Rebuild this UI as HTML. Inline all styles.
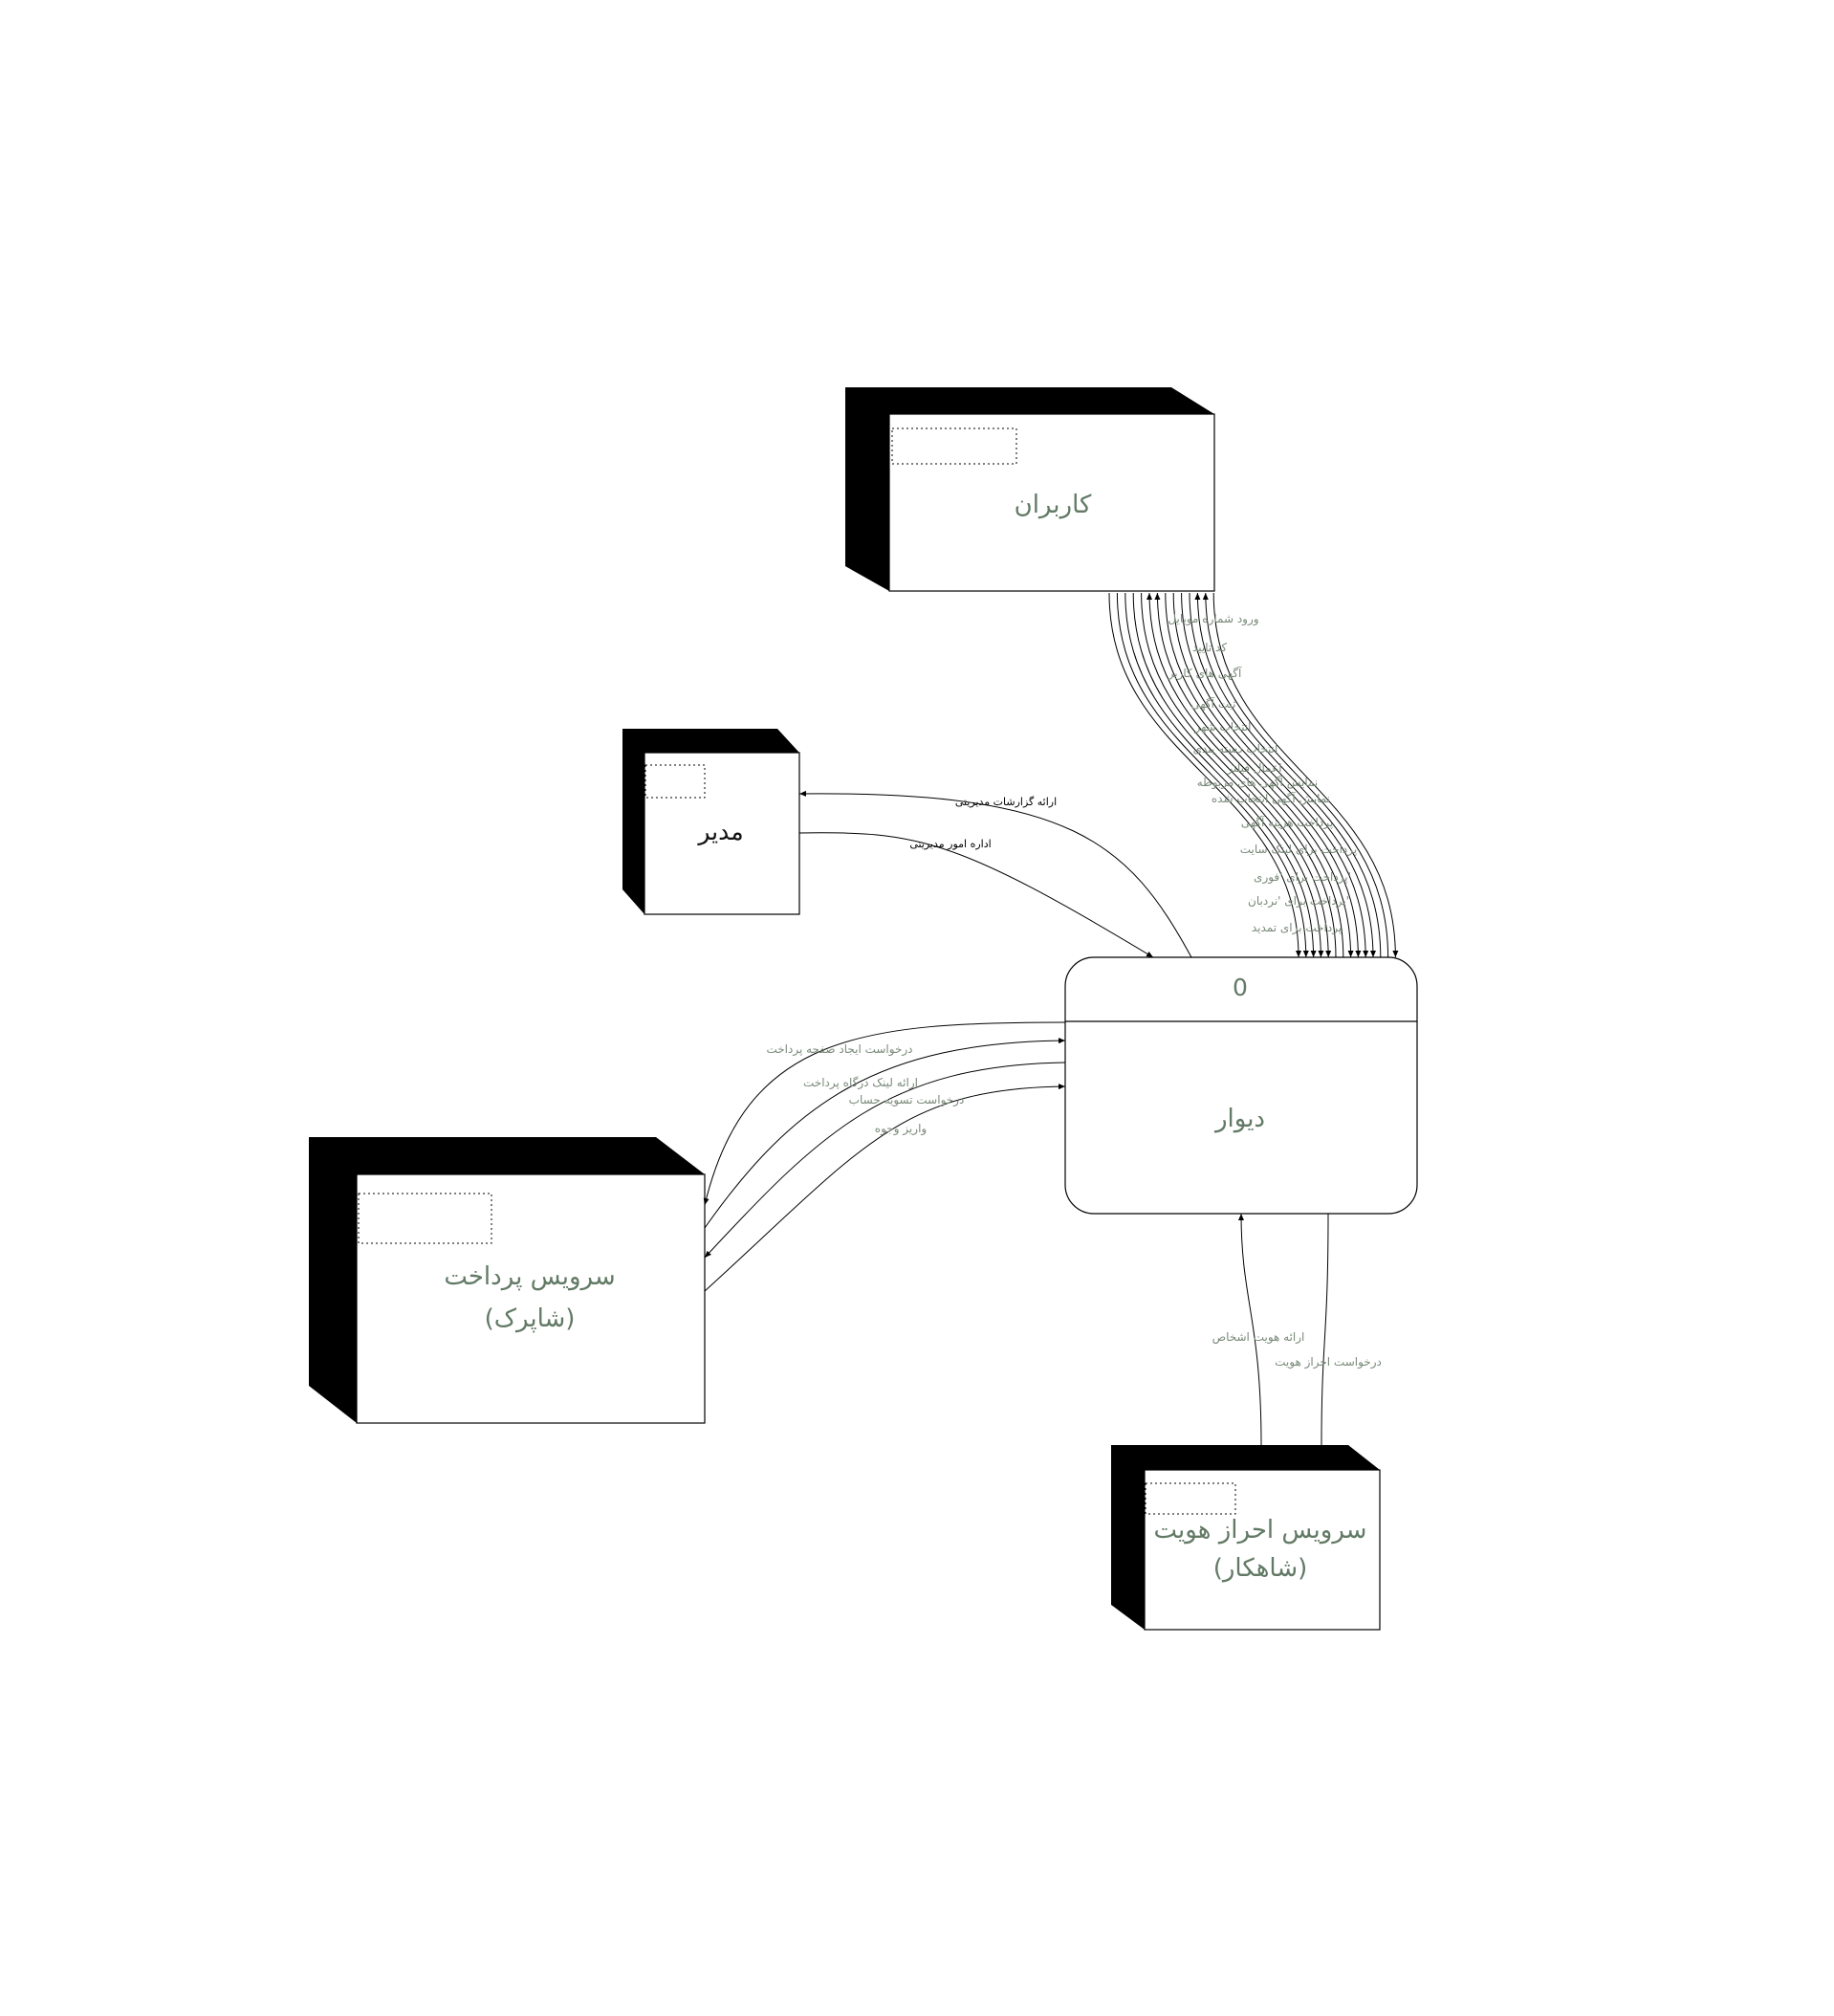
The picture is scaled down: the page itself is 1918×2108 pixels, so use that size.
<!DOCTYPE html>
<html><head><meta charset="utf-8"><style>
html,body{margin:0;padding:0;background:#fff;width:1918px;height:2108px;overflow:hidden}
svg{display:block}
text{font-family:"DejaVu Sans","Liberation Sans",sans-serif}
.g{fill:#627a65}
.lbl{font-size:12px;fill:#7a8a7a}
.blk{font-size:11px;fill:#000}
</style></head><body>
<svg width="1918" height="2108" viewBox="0 0 1918 2108" xmlns="http://www.w3.org/2000/svg">
<defs>
<marker id="a" markerWidth="8" markerHeight="8" refX="7" refY="4" orient="auto" markerUnits="userSpaceOnUse">
<path d="M0,1 L7,4 L0,7 z" fill="#000"/></marker>
</defs>

<polygon points="884,405 1225,405 1270,433 930,433 930,618 884,592" fill="#000"/>
<rect x="930" y="433" width="340" height="185" fill="#fff" stroke="#000" stroke-width="1.2"/>
<rect x="933" y="448" width="130" height="37" fill="none" stroke="#000" stroke-dasharray="2,3"/>
<text x="1101" y="536" class="g" font-size="26" text-anchor="middle">کاربران</text>

<polygon points="651,762 813,762 836,787 674,787 674,956 651,930" fill="#000"/>
<rect x="674" y="787" width="162" height="169" fill="#fff" stroke="#000" stroke-width="1.2"/>
<rect x="675" y="800" width="62" height="34" fill="none" stroke="#000" stroke-dasharray="2,3"/>
<text x="754" y="878" font-size="25" text-anchor="middle" fill="#111">مدیر</text>

<polygon points="323,1189 686,1189 737,1228 373,1228 373,1488 323,1449" fill="#000"/>
<rect x="373" y="1228" width="364" height="260" fill="#fff" stroke="#000" stroke-width="1.2"/>
<rect x="375" y="1248" width="139" height="52" fill="none" stroke="#000" stroke-dasharray="2,3"/>
<text x="554" y="1343" class="g" font-size="26" text-anchor="middle">سرویس پرداخت</text>
<text x="554" y="1387" class="g" font-size="26" text-anchor="middle">(شاپرک)</text>

<polygon points="1162,1511 1410,1511 1443,1537 1197,1537 1197,1704 1162,1678" fill="#000"/>
<rect x="1197" y="1537" width="246" height="167" fill="#fff" stroke="#000" stroke-width="1.2"/>
<rect x="1198" y="1551" width="94" height="32" fill="none" stroke="#000" stroke-dasharray="2,3"/>
<text x="1318" y="1608" class="g" font-size="26" text-anchor="middle">سرویس احراز هویت</text>
<text x="1318" y="1648" class="g" font-size="26" text-anchor="middle">(شاهکار)</text>

<rect x="1114" y="1001" width="368" height="268" rx="30" ry="30" fill="#fff" stroke="#000" stroke-width="1.2"/>
<line x1="1114" y1="1068" x2="1482" y2="1068" stroke="#000" stroke-width="1.2"/>
<text x="1297" y="1041" class="g" font-size="25" text-anchor="middle">0</text>
<text x="1297" y="1178" class="g" font-size="26" text-anchor="middle">دیوار</text>

<g fill="none" stroke="#000" stroke-width="1">
<path d="M1160,620 C1160,800 1358,820 1358,1001" marker-end="url(#a)"/>
<path d="M1168.4,620 C1168.4,800 1365.8,820 1365.8,1001" marker-end="url(#a)"/>
<path d="M1176.8,620 C1176.8,800 1373.6,820 1373.6,1001" marker-end="url(#a)"/>
<path d="M1185.2,620 C1185.2,800 1381.4,820 1381.4,1001" marker-end="url(#a)"/>
<path d="M1193.6,620 C1193.6,800 1389.2,820 1389.2,1001" marker-end="url(#a)"/>
<path d="M1397,1001 C1397,820 1202,800 1202,620" marker-end="url(#a)"/>
<path d="M1404.8,1001 C1404.8,820 1210.4,800 1210.4,620" marker-end="url(#a)"/>
<path d="M1218.8,620 C1218.8,800 1412.6,820 1412.6,1001" marker-end="url(#a)"/>
<path d="M1227.2,620 C1227.2,800 1420.4,820 1420.4,1001" marker-end="url(#a)"/>
<path d="M1235.6,620 C1235.6,800 1428.2,820 1428.2,1001" marker-end="url(#a)"/>
<path d="M1244,620 C1244,800 1436,820 1436,1001" marker-end="url(#a)"/>
<path d="M1443.8,1001 C1443.8,820 1252.4,800 1252.4,620" marker-end="url(#a)"/>
<path d="M1451.6,1001 C1451.6,820 1260.8,800 1260.8,620" marker-end="url(#a)"/>
<path d="M1269.2,620 C1269.2,800 1459.4,820 1459.4,1001" marker-end="url(#a)"/>

<path d="M1246,1001 C1180,880 1120,827 836,830" marker-end="url(#a)"/>
<path d="M836,871 C960,869 1000,877 1206,1001" marker-end="url(#a)"/>

<path d="M1114,1069 C900,1069 780,1082 737,1260" marker-end="url(#a)"/>
<path d="M737,1284 C830,1152 920,1090 1114,1088" marker-end="url(#a)"/>
<path d="M1114,1111 C930,1114 860,1182 737,1315" marker-end="url(#a)"/>
<path d="M737,1350 C900,1202 940,1138 1114,1136" marker-end="url(#a)"/>

<path d="M1319,1511 C1319,1380 1298,1360 1298,1269" marker-end="url(#a)"/>
<path d="M1389,1269 C1389,1400 1382,1400 1382,1511"/>
</g>

<g class="lbl" text-anchor="middle">
<text x="1269" y="651">ورود شماره موبایل</text>
<text x="1265" y="681">کد تایید</text>
<text x="1260" y="708">آگهی های کاربر</text>
<text x="1269" y="740">ثبت آگهی</text>
<text x="1279" y="764">انتخاب شهر</text>
<text x="1292" y="787">انتخاب دسته بندی</text>
<text x="1312" y="807">اعمال فیلتر</text>
<text x="1315" y="822">نمایش آگهی های مربوطه</text>
<text x="1329" y="839">نمایش آگهی انتخاب شده</text>
<text x="1346" y="864">پرداخت هزینه آگهی</text>
<text x="1358" y="892">پرداخت برای لینک سایت</text>
<text x="1362" y="921">پرداخت برای 'فوری'</text>
<text x="1358" y="946">پرداخت برای 'نردبان'</text>
<text x="1356" y="974">پرداخت برای تمدید</text>
<text x="878" y="1101">درخواست ایجاد صفحه پرداخت</text>
<text x="900" y="1136">ارائه لینک درگاه پرداخت</text>
<text x="948" y="1154">درخواست تسویه حساب</text>
<text x="942" y="1184">واریز وجوه</text>
<text x="1316" y="1402">ارائه هویت اشخاص</text>
<text x="1389" y="1428">درخواست احراز هویت</text>
</g>
<g class="blk" text-anchor="middle">
<text x="1052" y="842">ارائه گزارشات مدیریتی</text>
<text x="994" y="886">اداره امور مدیریتی</text>
</g>
</svg>
</body></html>
